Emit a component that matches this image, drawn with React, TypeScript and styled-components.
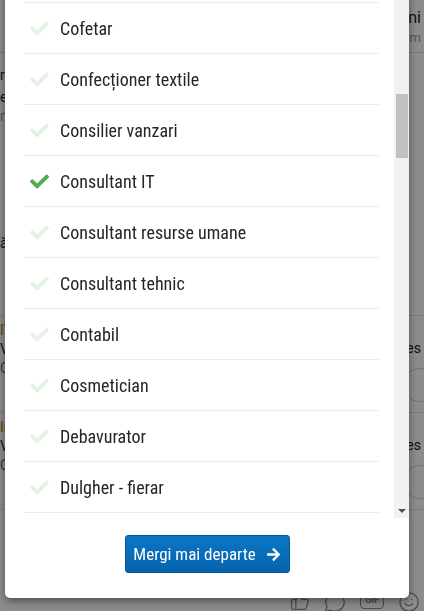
import React, { useLayoutEffect, useRef, useState } from "react";
import styled, { createGlobalStyle } from "styled-components";
import { FaCheck, FaArrowRight } from "react-icons/fa";
import { ThumbsUp, MessageCircle, Smile } from "lucide-react";

const GlobalStyle = createGlobalStyle`
  html, body {
    margin: 0;
    padding: 0;
    width: 424px;
    height: 611px;
    overflow: hidden;
    background: #ffffff;
    font-family: Roboto, "Liberation Sans", sans-serif;
  }
  #root { width: 424px; height: 611px; }
  * { box-sizing: border-box; }
`;

/* ---------- background page ---------- */

const Page = styled.div`
  width: 424px;
  height: 611px;
  overflow: hidden;
  background: #ffffff;
  color: #222;
  display: flex;
  flex-direction: column;
`;

const PageHeader = styled.div`
  height: 53px;
  flex: none;
  border-bottom: 1px solid #dcdcdc;
  display: flex;
  flex-direction: column;
  align-items: flex-end;
  justify-content: center;
  gap: 3px;
  padding-right: 3px;
`;

const HeadTitle = styled.div`
  font-size: 16px;
  white-space: nowrap;
`;

const HeadSub = styled.div`
  font-size: 13px;
  color: #a0a0a0;
  white-space: nowrap;
`;

const Intro = styled.div`
  height: 263px;
  flex: none;
  display: flex;
  flex-direction: column;
  padding-top: 13px;
  font-size: 14px;
  line-height: 19px;
  border-bottom: 1px solid #e4e4e4;
`;

const IntroLine = styled.div<{ $muted?: boolean; $gap?: number }>`
  white-space: nowrap;
  color: ${(p) => (p.$muted ? "#9a9a9a" : "#222")};
  margin-top: ${(p) => p.$gap ?? 0}px;
`;

const Card = styled.div`
  height: 97px;
  flex: none;
  display: flex;
  justify-content: space-between;
  border-bottom: 1px solid #e4e4e4;
`;

const CardLeft = styled.div`
  display: flex;
  flex-direction: column;
  padding-top: 5px;
  font-size: 14px;
  line-height: 19px;
`;

const CardLine = styled.div<{ $tone?: "brand" | "muted" }>`
  white-space: nowrap;
  color: ${(p) => (p.$tone === "brand" ? "#b07a12" : p.$tone === "muted" ? "#666" : "#222")};
`;

const CardRight = styled.div`
  width: 200px;
  display: flex;
  flex-direction: column;
  align-items: flex-end;
  padding-top: 24px;
  padding-right: 3px;
  gap: 12px;
  font-size: 14px;
`;

const RoundButton = styled.div`
  width: 34px;
  height: 34px;
  border-radius: 50%;
  border: 1px solid #cfcfcf;
  margin-right: -16px;
`;

const BottomBar = styled.div`
  flex: 1;
  display: flex;
  justify-content: flex-end;
  align-items: flex-start;
  gap: 14px;
  padding-top: 81px;
  padding-right: 4px;
  color: #8a8a8a;
`;

const GifBox = styled.div`
  width: 24px;
  height: 18px;
  border: 1.5px solid #8a8a8a;
  border-radius: 4px;
  font-size: 9px;
  font-weight: 700;
  display: flex;
  align-items: center;
  justify-content: center;
`;

/* ---------- modal ---------- */

const Backdrop = styled.div`
  position: fixed;
  inset: 0;
  background: rgba(0, 0, 0, 0.45);
`;

const Modal = styled.div`
  position: fixed;
  left: 5px;
  top: -30px;
  width: 404px;
  height: 628px;
  background: #ffffff;
  border-radius: 0 0 5px 5px;
  box-shadow: 0 3px 9px rgba(0, 0, 0, 0.45);
  display: flex;
  flex-direction: column;
  overflow: hidden;
`;

const ListArea = styled.div`
  height: 548px;
  flex: none;
  display: flex;
`;

const List = styled.div`
  flex: 1;
  min-width: 0;
  overflow-y: scroll;
  padding: 0 15px 0 19px;
  scrollbar-width: none;
  &::-webkit-scrollbar {
    display: none;
  }
`;

const Rail = styled.div`
  width: 15px;
  flex: none;
  display: flex;
  flex-direction: column;
  background: #f1f1f1;
`;

const RailButton = styled.div<{ $dir: "up" | "down" }>`
  height: 15px;
  flex: none;
  display: flex;
  align-items: center;
  justify-content: center;
  &::after {
    content: "";
    width: 0;
    height: 0;
    border-left: 4px solid transparent;
    border-right: 4px solid transparent;
    ${(p) =>
      p.$dir === "down"
        ? "border-top: 4px solid #505050;"
        : "border-bottom: 4px solid #505050;"}
  }
`;

const Track = styled.div`
  flex: 1;
  display: flex;
  flex-direction: column;
`;

const Thumb = styled.div`
  flex: none;
  margin-left: 2px;
  margin-right: 1px;
  background: #c1c1c1;
`;

const Row = styled.div`
  height: 51px;
  display: flex;
  align-items: center;
  border-bottom: 1px solid #ececec;
  cursor: pointer;
`;

const CheckMark = styled.span<{ $on: boolean }>`
  width: 20px;
  margin-left: 6px;
  display: flex;
  align-items: center;
  color: ${(p) => (p.$on ? "#4cae4c" : "#e4f2e4")};
  font-size: 19px;
`;

const RowLabel = styled.span`
  margin-left: 10px;
  font-size: 18px;
  font-stretch: 87.5%;
  color: #252525;
  white-space: nowrap;
`;

const Footer = styled.div`
  flex: 1;
  display: flex;
  justify-content: center;
  align-items: flex-start;
  padding-top: 17px;
`;

const GoButton = styled.button`
  width: 165px;
  height: 38px;
  display: flex;
  align-items: center;
  justify-content: center;
  gap: 10px;
  padding: 0;
  border: 1px solid #055896;
  border-radius: 3px;
  background: linear-gradient(#0b76c6, #0664ad);
  color: #ffffff;
  font-family: Roboto, "Liberation Sans", sans-serif;
  font-size: 17px;
  font-stretch: 87.5%;
  cursor: pointer;
`;

const before = [
  "Achizitor",
  "Administrator",
  "Agent de paza",
  "Agent imobiliar",
  "Agent vanzari",
  "Ajutor bucatar",
  "Ambalator",
  "Asistent manager",
  "Asistent medical",
  "Barman",
  "Betonist",
  "Bona",
  "Brutar",
  "Bucatar",
  "Call center",
  "Camerista",
  "Casier",
  "Cizmar",
  "Coafor",
];

const visible = [
  "Cofetar",
  "Confecționer textile",
  "Consilier vanzari",
  "Consultant IT",
  "Consultant resurse umane",
  "Consultant tehnic",
  "Contabil",
  "Cosmetician",
  "Debavurator",
  "Dulgher - fierar",
];

const after = [
  "Electrician",
  "Electronist",
  "Faiantar",
  "Farmacist",
  "Fierar betonist",
  "Frizer",
  "Gestionar",
  "Gradinar",
  "Grafician",
  "Inginer constructii",
  "Inginer software",
  "Instalator",
  "Instructor auto",
  "Jurist",
  "Lacatus mecanic",
  "Manichiurista",
  "Manipulant marfa",
  "Mecanic auto",
  "Medic",
  "Menajera",
  "Montator",
  "Muncitor necalificat",
  "Operator call center",
  "Operator CNC",
  "Operator date",
  "Operator productie",
  "Ospatar",
  "Patiser",
  "Paznic",
  "Picker",
  "Pictor",
  "Pizzar",
  "Programator",
  "Psiholog",
  "Receptioner",
  "Reprezentant vanzari",
  "Secretara",
  "Sef de tura",
  "Sofer",
  "Sofer profesionist",
  "Stivuitorist",
  "Sudor",
  "Tamplar",
  "Tapitier",
  "Tehnician",
  "Telefonist",
  "Tester",
  "Tinichigiu",
  "Topograf",
  "Tractorist",
  "Traducator",
  "Ucenic",
  "Vanzator",
  "Vopsitor",
  "Vulcanizator",
  "Web designer",
  "Zidar",
  "Zugrav",
];

const jobs = [...before, ...visible, ...after];
const selected = "Consultant IT";
const TRACK = 548 - 30;

export default function App() {
  const listRef = useRef<HTMLDivElement>(null);
  const [thumb, setThumb] = useState({ top: 107, size: 64 });

  const measure = () => {
    const el = listRef.current;
    if (!el) return;
    const size = Math.max(20, (TRACK * el.clientHeight) / el.scrollHeight);
    const range = el.scrollHeight - el.clientHeight;
    const top = range > 0 ? (el.scrollTop / range) * (TRACK - size) : 0;
    setThumb({ top, size });
  };

  useLayoutEffect(() => {
    if (listRef.current) {
      listRef.current.scrollTop = before.length * 51 - 33;
    }
    measure();
  }, []);

  return (
    <>
      <GlobalStyle />
      <Page>
        <PageHeader>
          <HeadTitle>Candidați noi: 24 oameni</HeadTitle>
          <HeadSub>Actualizat acum</HeadSub>
        </PageHeader>
        <Intro>
          <IntroLine $gap={0}>recomandări pentru tine</IntroLine>
          <IntroLine $gap={3}>exemple de anunțuri</IntroLine>
          <IntroLine $muted>noutăți</IntroLine>
          <IntroLine $gap={108}>ăsta e jobul potrivit</IntroLine>
        </Intro>
        <Card>
          <CardLeft>
            <CardLine $tone="brand">IT Solutions SRL</CardLine>
            <CardLine>Vânzător</CardLine>
            <CardLine $tone="muted">Cluj-Napoca</CardLine>
          </CardLeft>
          <CardRight>
            <span>Categorii: Sales</span>
            <RoundButton />
          </CardRight>
        </Card>
        <Card>
          <CardLeft>
            <CardLine $tone="brand">Inter Group</CardLine>
            <CardLine>Vânzător</CardLine>
            <CardLine $tone="muted">Constanța</CardLine>
          </CardLeft>
          <CardRight>
            <span>Categorii: Sales</span>
            <RoundButton />
          </CardRight>
        </Card>
        <BottomBar>
          <ThumbsUp size={20} strokeWidth={1.5} />
          <MessageCircle size={22} strokeWidth={1.5} />
          <GifBox>GIF</GifBox>
          <Smile size={22} strokeWidth={1.5} />
        </BottomBar>
      </Page>
      <Backdrop />
      <Modal>
        <ListArea>
          <List ref={listRef} onScroll={measure}>
            {jobs.map((job) => (
              <Row key={job}>
                <CheckMark $on={job === selected}>
                  <FaCheck />
                </CheckMark>
                <RowLabel>{job}</RowLabel>
              </Row>
            ))}
          </List>
          <Rail>
            <RailButton $dir="up" />
            <Track>
              <Thumb style={{ marginTop: thumb.top, height: thumb.size }} />
            </Track>
            <RailButton $dir="down" />
          </Rail>
        </ListArea>
        <Footer>
          <GoButton>
            <span>Mergi mai departe</span>
            <FaArrowRight size={15} />
          </GoButton>
        </Footer>
      </Modal>
    </>
  );
}
